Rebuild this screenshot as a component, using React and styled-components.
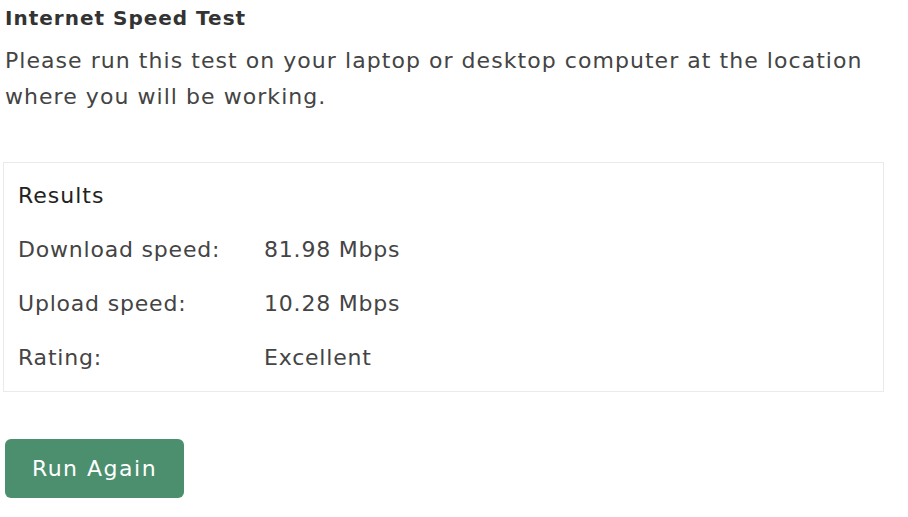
import React from 'react';
import styled, { createGlobalStyle } from 'styled-components';

const GlobalStyle = createGlobalStyle`
  body {
    margin: 0;
    background: #fff;
    font-family: 'DejaVu Sans', 'Liberation Sans', sans-serif;
    color: #444;
  }
`;

const Page = styled.div`
  padding: 4px 24px 0 3px;
`;

const Title = styled.h1`
  margin: 0 0 0 2px;
  font-size: 20px;
  line-height: 28px;
  font-weight: 600;
  letter-spacing: 1px;
  color: #333;
`;

const Intro = styled.p`
  margin: 11px 0 0 2px;
  font-size: 22px;
  line-height: 36px;
  letter-spacing: 1.05px;
`;

const ResultsBox = styled.section`
  margin-top: 47px;
  border: 1.5px solid #eaeaea;
  padding: 15px 14px 15px;
  display: flex;
  flex-direction: column;
  gap: 18px;
`;

const BoxTitle = styled.div`
  font-size: 22px;
  line-height: 36px;
  letter-spacing: 1px;
  color: #222;
`;

const Row = styled.div`
  display: grid;
  grid-template-columns: 246px 1fr;
  font-size: 22px;
  line-height: 36px;
  letter-spacing: 0.8px;
`;

const Button = styled.button`
  margin: 47px 0 0 2px;
  width: 179px;
  height: 59px;
  border: none;
  border-radius: 6px;
  background: #4b8f6e;
  color: #fff;
  font-family: inherit;
  font-size: 22px;
  letter-spacing: 1.5px;
  cursor: pointer;
`;

const results = [
  ['Download speed:', '81.98 Mbps'],
  ['Upload speed:', '10.28 Mbps'],
  ['Rating:', 'Excellent'],
];

export default function App() {
  return (
    <Page>
      <GlobalStyle />
      <Title>Internet Speed Test</Title>
      <Intro>
        Please run this test on your laptop or desktop computer at the location where you will be
        working.
      </Intro>
      <ResultsBox>
        <BoxTitle>Results</BoxTitle>
        {results.map(([label, value]) => (
          <Row key={label}>
            <span>{label}</span>
            <span>{value}</span>
          </Row>
        ))}
      </ResultsBox>
      <Button>Run Again</Button>
    </Page>
  );
}
